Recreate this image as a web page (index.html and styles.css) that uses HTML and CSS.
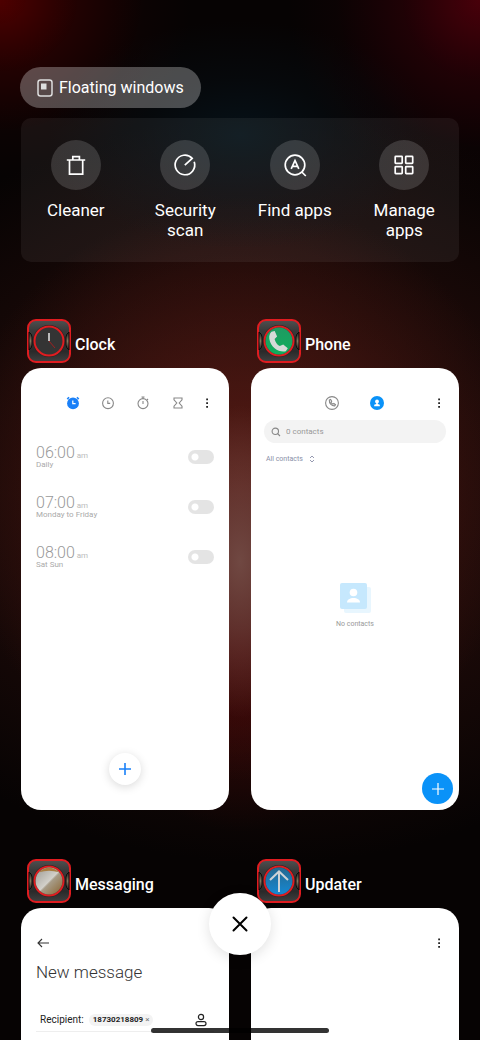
FILE: index.html
```html
<!DOCTYPE html>
<html lang="en">
<head>
<meta charset="utf-8">
<meta name="viewport" content="width=device-width, initial-scale=1">
<title>Recents</title>
<link rel="stylesheet" href="styles.css">
</head>
<body>

<!-- shared parts -->
<svg class="defs" width="0" height="0" aria-hidden="true">
  <defs>
    <linearGradient id="g-case" x1="0" y1="0" x2="0" y2="1">
      <stop offset="0" stop-color="#505050"/><stop offset=".25" stop-color="#3a3a3a"/><stop offset=".75" stop-color="#2a2a2a"/><stop offset="1" stop-color="#404040"/>
    </linearGradient>
    <linearGradient id="g-side" x1="0" y1="0" x2="0" y2="1">
      <stop offset="0" stop-color="#1a1a1a"/><stop offset=".5" stop-color="#8a7a60"/><stop offset="1" stop-color="#1a1a1a"/>
    </linearGradient>
    <linearGradient id="g-green" x1="0" y1="0" x2="0" y2="1">
      <stop offset="0" stop-color="#1f9a62"/><stop offset="1" stop-color="#0fae5c"/>
    </linearGradient>
    <linearGradient id="g-blue" x1="0" y1="0" x2="0" y2="1">
      <stop offset="0" stop-color="#24688f"/><stop offset="1" stop-color="#1688d2"/>
    </linearGradient>
    <linearGradient id="g-mail" x1="0" y1="0" x2="1" y2="1">
      <stop offset="0" stop-color="#9c9a94"/><stop offset=".5" stop-color="#d2d0ca"/><stop offset=".55" stop-color="#a79c88"/><stop offset="1" stop-color="#8a6430"/>
    </linearGradient>
    <symbol id="case" viewBox="0 0 44 44">
      <rect x="1" y="1" width="42" height="42" rx="8" fill="url(#g-case)" stroke="#e01c20" stroke-width="2"/>
      <path d="M2 13q3 2 3 5v8q0 3-3 5zM42 13q-3 2-3 5v8q0 3 3 5z" fill="url(#g-side)" stroke="#0c0c0c" stroke-width="1"/>
      <circle cx="22" cy="22" r="16" fill="#222"/>
      <circle cx="22" cy="22" r="14.5" fill="#343434" stroke="#e01c20" stroke-width="2"/>
    </symbol>
    <symbol id="kebab" viewBox="0 0 16 16">
      <path d="M7.2 3.4H9v1.8H7.2zM7.2 7.2H9V9H7.2zM7.2 11H9v1.8H7.2z" fill="#222"/>
    </symbol>
  </defs>
</svg>

<main class="recents">
  <button class="pill" type="button">
    <svg width="16" height="18" viewBox="0 0 16 18" fill="none"><rect x="1" y="1" width="14" height="16" rx="2.5" stroke="#ddd" stroke-width="1.5"/><path d="M4 4.5h5.5v6H4z" fill="#ddd"/></svg>
    Floating windows
  </button>

  <nav class="tools">
    <button class="tool" type="button">
      <span class="disc"><svg width="26" height="26" viewBox="0 0 26 26"><path d="M3.8 8h18.4M6.5 8v14.2h13.2V8M9.8 8V4.6h6.6V8"/></svg></span>
      Cleaner
    </button>
    <button class="tool" type="button">
      <span class="disc"><svg width="26" height="26" viewBox="0 0 26 26"><path d="M12.8 13.2l7.4-6.8A9.8 9.8 0 1 0 22.2 9.8"/></svg></span>
      Security scan
    </button>
    <button class="tool" type="button">
      <span class="disc"><svg width="26" height="26" viewBox="0 0 26 26"><circle cx="13" cy="13" r="9.8"/><path d="M19.8 20l4 4M9.2 16.8L13 8.5l3.8 8.3M10.5 14.3h5"/></svg></span>
      Find apps
    </button>
    <button class="tool" type="button">
      <span class="disc"><svg width="26" height="26" viewBox="0 0 26 26"><rect x="4.2" y="4.4" width="7" height="7" rx=".6"/><rect x="14.7" y="4.4" width="7" height="7" rx=".6"/><rect x="4.2" y="14.6" width="7" height="7" rx=".6"/><rect x="14.7" y="14.6" width="7" height="7" rx=".6"/></svg></span>
      Manage apps
    </button>
  </nav>

  <div class="apps">
    <section class="app">
      <h2 class="app-name">
        <svg width="44" height="44" viewBox="0 0 44 44"><use href="#case"/><path d="M22 14v8" stroke="#bbb" stroke-width="2"/><path d="M22 22l6 7" stroke="#a02020" stroke-width="1"/></svg>
        Clock
      </h2>
      <div class="card">
        <div class="bar bar-clock">
          <button type="button" aria-label="Alarm"><svg width="16" height="16" viewBox="0 0 16 16"><circle cx="8" cy="8.4" r="5.9" fill="#1a80f8"/><path d="M2.2 4.1A8 8 0 0 1 4.2 2.4M13.8 4.1a8 8 0 0 0-2-1.7" stroke="#1a80f8" stroke-width="1.4" fill="none"/><path d="M7.8 5.4v3.3h2.8" stroke="#fff" stroke-width="1.2" fill="none"/></svg></button>
          <button type="button" aria-label="World clock"><svg class="grey" width="16" height="16" viewBox="0 0 16 16"><circle cx="8" cy="8.2" r="5.4"/><path d="M7.8 5.4v3h2.4"/></svg></button>
          <button type="button" aria-label="Stopwatch"><svg class="grey" width="16" height="16" viewBox="0 0 16 16"><circle cx="8" cy="8.6" r="5"/><path d="M6.5 2h3M8 2v1.7M8 6v3M12 4l1 1"/></svg></button>
          <button type="button" aria-label="Timer"><svg class="grey" width="16" height="16" viewBox="0 0 16 16"><path d="M4 3h8v1.8L9.2 8l2.8 3.2V13H4v-1.8L6.8 8 4 4.8z"/></svg></button>
          <button class="more" type="button" aria-label="More"><svg width="16" height="16"><use href="#kebab"/></svg></button>
        </div>
        <ul class="alarms">
          <li>
            <label for="a1"><span class="time">06:00 <small>am</small></span><span class="days">Daily</span></label>
            <input type="checkbox" class="switch" id="a1">
          </li>
          <li>
            <label for="a2"><span class="time">07:00 <small>am</small></span><span class="days">Monday to Friday</span></label>
            <input type="checkbox" class="switch" id="a2">
          </li>
          <li>
            <label for="a3"><span class="time">08:00 <small>am</small></span><span class="days">Sat Sun</span></label>
            <input type="checkbox" class="switch" id="a3">
          </li>
        </ul>
        <button class="add add-alarm" type="button" aria-label="Add alarm"><svg width="14" height="14" viewBox="0 0 14 14"><path d="M7 1v12M1 7h12" stroke="#1a80f8" stroke-width="1.6"/></svg></button>
      </div>
    </section>

    <section class="app">
      <h2 class="app-name">
        <svg width="44" height="44" viewBox="0 0 44 44"><use href="#case"/><circle cx="22" cy="22" r="13.4" fill="url(#g-green)"/><path d="M14.5 12.8l3.2-.8 2.4 5.6-2.5 2.3c.8 3.4 2.5 5.8 5.2 7.2l3.4-1.6 4.6 3.8-2 3c-6 1.6-15-3-16.5-12.5-.4-3 .6-5.500 2.200-7z" fill="#d6dad8"/></svg>
        Phone
      </h2>
      <div class="card">
        <div class="bar bar-phone">
          <button type="button" aria-label="Calls"><svg class="grey" width="16" height="16" viewBox="0 0 16 16"><circle cx="8" cy="8" r="6.4"/><path d="M5.3 5l1.3-.6 1.1 1.9-.7.9c.4.9 1 1.5 1.9 1.9l.9-.6 1.7 1.200-.8 1.200C8 11.100 5 8.300 5.300 5z"/></svg></button>
          <button type="button" aria-label="Contacts"><svg width="16" height="16" viewBox="0 0 16 16"><circle cx="8" cy="8" r="7" fill="#0a92f8"/><circle cx="8" cy="6.4" r="1.9" fill="#fff"/><path d="M7.2 7h1.6v2l2 .8v1.4H5.2V9.8l2-.8z" fill="#fff"/></svg></button>
          <button class="more" type="button" aria-label="More"><svg width="16" height="16"><use href="#kebab"/></svg></button>
        </div>
        <label class="search">
          <svg class="grey" width="10" height="10" viewBox="0 0 10 10"><circle cx="4.3" cy="4.3" r="3.2"/><path d="M6.6 6.6l2.4 2.4"/></svg>
          <input type="text" placeholder="0 contacts" aria-label="Search contacts">
        </label>
        <button class="filter" type="button">All contacts
          <svg width="6" height="8" viewBox="0 0 6 8"><path d="M1 3l2-2 2 2M1 5l2 2 2-2" fill="none" stroke="#8a8fa8" stroke-width=".9"/></svg>
        </button>
        <div class="empty">
          <svg width="32" height="32" viewBox="0 0 32 32"><rect x="5" y="5" width="27" height="26" rx="2" fill="#e8f6fe"/><rect x="1" y="1" width="27" height="26" rx="2" fill="#c6e8fd"/><circle cx="14.5" cy="10.5" r="3.8" fill="#fff"/><path d="M8 20.5c0-3 3-4.5 6.500-4.500s6.500 1.500 6.500 4.500z" fill="#fff"/></svg>
          <p>No contacts</p>
        </div>
        <button class="add add-contact" type="button" aria-label="Add contact"><svg width="14" height="14" viewBox="0 0 14 14"><path d="M7 1v12M1 7h12" stroke="#fff" stroke-width="1.2"/></svg></button>
      </div>
    </section>

    <section class="app">
      <h2 class="app-name">
        <svg width="44" height="44" viewBox="0 0 44 44"><use href="#case"/><circle cx="22" cy="22" r="13.4" fill="url(#g-mail)"/><path d="M12 13.200a13.400 13.400 0 0 1 20 0q-10-3-20 0z" fill="#a87c40"/></svg>
        Messaging
      </h2>
      <div class="card">
        <div class="bar bar-message">
          <button type="button" aria-label="Back"><svg width="16" height="16" viewBox="0 0 16 16"><path d="M14 8H3M7 4L3 8l4 4" fill="none" stroke="#333" stroke-width="1.1"/></svg></button>
        </div>
        <h3 class="heading">New message</h3>
        <div class="recipient">
          <span>Recipient:</span>
          <button class="chip" type="button">18730218809 <i>×</i></button>
          <button class="pick" type="button" aria-label="Choose contact"><svg width="12" height="14" viewBox="0 0 12 14" fill="none" stroke="#222" stroke-width="1.2"><circle cx="6" cy="4" r="2.6"/><rect x="1" y="8.6" width="10" height="4" rx="2"/></svg></button>
        </div>
      </div>
    </section>

    <section class="app">
      <h2 class="app-name">
        <svg width="44" height="44" viewBox="0 0 44 44"><use href="#case"/><circle cx="22" cy="22" r="13.4" fill="url(#g-blue)"/><path d="M22 33V12.5M13 21l9-8.5 9 8.5" fill="none" stroke="#ccd2d6" stroke-width="2"/></svg>
        Updater
      </h2>
      <div class="card">
        <div class="bar bar-updater">
          <button class="more" type="button" aria-label="More"><svg width="16" height="16"><use href="#kebab"/></svg></button>
        </div>
      </div>
    </section>
  </div>
</main>

<button class="close" type="button" aria-label="Close all"><svg width="16" height="16" viewBox="0 0 16 16"><path d="M1.5 1.5l13 13M14.5 1.5l-13 13" stroke="#000" stroke-width="2" stroke-linecap="round"/></svg></button>
<div class="home"></div>

</body>
</html>
```
FILE: styles.css
```css
*{margin:0;padding:0;box-sizing:border-box;}
body{
  font-family:Roboto,"Liberation Sans",sans-serif;
  color:#fff;
  height:100vh;
  overflow:hidden;
  background:
    radial-gradient(ellipse 40% 17% at 0 0,rgba(78,0,0,1),rgba(60,0,0,.5) 40%,rgba(40,0,0,.15) 75%,rgba(40,0,0,0)),
    radial-gradient(ellipse 40% 19% at 100% 0,rgba(72,0,10,1),rgba(56,0,8,.5) 40%,rgba(40,0,6,.15) 75%,rgba(40,0,6,0)),
    radial-gradient(ellipse 40% 11% at 50% 13%,rgba(6,17,24,1),rgba(6,17,24,.4) 50%,rgba(6,17,24,0)),
    radial-gradient(ellipse 16% 15% at 50% 54%,rgba(112,72,66,1),rgba(112,72,66,.6) 45%,rgba(112,72,66,0)),
    radial-gradient(ellipse 30% 18% at 50% 62%,rgba(72,6,6,.8),rgba(72,6,6,0)),
    radial-gradient(ellipse 60% 28% at 50% 47%,rgba(86,26,20,1),rgba(86,26,20,.4) 60%,rgba(86,26,20,0)),
    radial-gradient(ellipse 100% 36% at 56% 47%,rgba(44,15,12,1),rgba(44,15,12,.5) 60%,rgba(44,15,12,0)),
    #060303;
}
button{border:0;background:none;font:inherit;color:inherit;cursor:pointer;}
svg{display:block;flex:none;}
ul{list-style:none;}
.defs{position:absolute;}

.recents{height:100vh;padding:67px 21px 0;overflow:hidden;}
.pill{
  display:flex;
  align-items:center;
  gap:6px;
  height:41px;
  padding:0 17px;
  margin-left:-1px;
  border-radius:21px;
  background:rgba(255,255,255,.28);
  font-size:16px;
}

.tools{
  display:grid;
  grid-template-columns:repeat(4,1fr);
  margin-top:10px;
  height:144px;
  padding-top:22px;
  border-radius:10px;
  background:rgba(255,255,255,.06);
}
.tool{
  display:flex;
  flex-direction:column;
  align-items:center;
  gap:10px;
  padding:0 14px;
  font-size:17px;
  line-height:20px;
}
.disc{
  display:flex;
  align-items:center;
  justify-content:center;
  width:50px;
  height:50px;
  border-radius:50%;
  background:rgba(255,255,255,.15);
}
.disc svg{fill:none;stroke:#fff;stroke-width:1.7;}

.apps{
  display:grid;
  grid-template-columns:1fr 1fr;
  gap:49px 22px;
  margin-top:57px;
}
.app-name{
  display:flex;
  align-items:flex-start;
  gap:4px;
  height:44px;
  padding-left:6px;
  font-size:16px;
  font-weight:500;
  line-height:51px;
}
.card{
  position:relative;
  display:flex;
  flex-direction:column;
  margin-top:5px;
  aspect-ratio:208/442;
  border-radius:20px;
  background:#fff;
  color:#999;
}

.bar{display:flex;padding:27px 12px 0 0;}
.bar .more{margin-left:auto;}
.bar-clock{gap:19px;padding:27px 14px 0 44px;}
.bar-clock .more{margin-left:-6px;}
.bar-phone{gap:29px;padding-left:73px;}
.bar-message{padding-left:14px;}
.grey{fill:none;stroke:#888;stroke-width:1.1;}

.alarms{padding:21px 15px 0;}
.alarms li{display:flex;align-items:center;justify-content:space-between;height:50px;}
.time,.days{display:block;}
.time{font-size:16px;font-weight:300;line-height:15px;}
.time small{font-size:8px;font-weight:400;line-height:8px;margin-left:-2px;color:#bbb;}
.days{font-size:8px;line-height:9px;color:#aaa;}
.switch{
  appearance:none;
  width:26px;
  height:14px;
  border-radius:7px;
  background:radial-gradient(circle at 7px 7px,#fff 3px,#e4e4e4 4px);
}

.add{
  position:absolute;
  display:flex;
  align-items:center;
  justify-content:center;
  border-radius:50%;
}
.add-alarm{
  left:50%;
  bottom:25px;
  width:32px;
  height:32px;
  margin-left:-16px;
  background:#fff;
  box-shadow:0 2px 10px rgba(0,0,0,.15);
}
.add-contact{right:6px;bottom:6px;width:31px;height:31px;background:#0a92f8;}

.search{
  display:flex;
  align-items:center;
  gap:5px;
  height:23px;
  margin:9px 13px 0;
  padding-left:7px;
  border-radius:12px;
  background:#f3f3f3;
}
.search input{width:100%;border:0;outline:0;background:none;font:8px Roboto,"Liberation Sans",sans-serif;}
.search input::placeholder{color:#999;}
.filter{
  display:flex;
  align-items:center;
  gap:6px;
  margin:12px 0 0 15px;
  font-size:7px;
  line-height:8px;
  color:#8a8fa8;
}
.empty{
  display:flex;
  flex-direction:column;
  align-items:center;
  gap:5px;
  margin-top:119px;
  font-size:7px;
  line-height:10px;
}

.heading{margin:11px 0 0 15px;font-size:17px;font-weight:300;line-height:20px;color:#333;}
.recipient{
  display:flex;
  align-items:center;
  height:24px;
  margin:26px 15px 0;
  padding:0 7px 0 4px;
  border-bottom:1px solid #eee;
  font-size:10px;
  color:#222;
}
.chip{
  height:12px;
  margin-left:5px;
  padding:0 4px;
  border-radius:6px;
  background:#f3f3f3;
  font-size:8px;
  font-weight:700;
  line-height:12px;
}
.chip i{font-style:normal;font-weight:400;color:#777;}
.pick{margin-left:auto;}

.close{
  position:fixed;
  left:50%;
  bottom:85px;
  display:flex;
  align-items:center;
  justify-content:center;
  width:62px;
  height:62px;
  margin-left:-31px;
  border-radius:50%;
  background:#fff;
  box-shadow:0 3px 14px rgba(0,0,0,.12);
}
.home{
  position:fixed;
  left:50%;
  bottom:7px;
  width:178px;
  height:5px;
  margin-left:-89px;
  border-radius:3px;
  background:rgba(0,0,0,.8);
}
```
